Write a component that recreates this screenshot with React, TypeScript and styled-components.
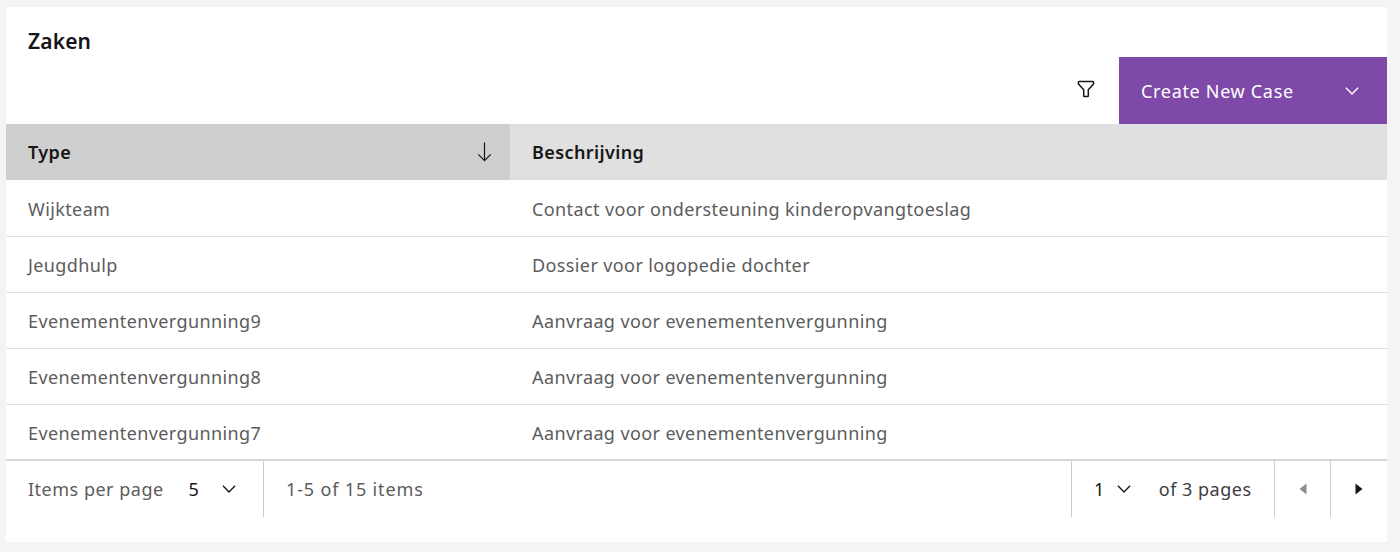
import React from 'react'
import styled, { createGlobalStyle } from 'styled-components'

const Global = createGlobalStyle`
  html, body {
    margin: 0;
    background: #f4f4f4;
    font-family: "Noto Sans", "Open Sans", sans-serif;
    color: #161616;
  }
`

const Card = styled.section`
  width: 1381px;
  height: 535px;
  margin: 7px 0 0 6px;
  background: #fff;
  display: flex;
  flex-direction: column;
`

const Title = styled.h4`
  height: 50px;
  margin: 0;
  padding: 20px 0 0 22px;
  box-sizing: border-box;
  font-size: 21px;
  line-height: 28px;
  letter-spacing: 0.15px;
  font-weight: 600;
  color: #161616;
`

const Toolbar = styled.div`
  height: 67px;
  display: flex;
  justify-content: flex-end;
  align-items: stretch;
`

const IconButton = styled.button`
  width: 67px;
  border: 0;
  padding: 0 0 3px 0;
  background: none;
  display: flex;
  align-items: center;
  justify-content: center;
  color: #161616;
`

const CreateButton = styled.button`
  width: 268px;
  border: 0;
  padding: 0 26px 0 22px;
  background: #7e49a8;
  color: #fff;
  font: inherit;
  font-size: 18px;
  letter-spacing: 0.68px;
  display: flex;
  align-items: center;
  justify-content: space-between;
`

const Table = styled.table`
  width: 100%;
  border-collapse: collapse;
  table-layout: fixed;
`

const HeadCell = styled.th<{ $sorted?: boolean }>`
  height: 56px;
  padding: 0 16px 0 22px;
  box-sizing: border-box;
  background: ${p => (p.$sorted ? '#cfcfcf' : '#e0e0e0')};
  width: ${p => (p.$sorted ? '504px' : 'auto')};
  font-size: 18px;
  font-weight: 600;
  letter-spacing: 0.4px;
  text-align: left;
  color: #161616;
`

const HeadInner = styled.div`
  display: flex;
  align-items: center;
  justify-content: space-between;
`

const Cell = styled.td`
  height: 56px;
  padding: 2px 16px 0 22px;
  box-sizing: border-box;
  border-bottom: 1px solid #e0e0e0;
  font-size: 18px;
  letter-spacing: 0.39px;
  color: #5c5c5c;
`

const Footer = styled.footer`
  height: 58px;
  margin-top: -2px;
  border-top: 2px solid #d6d6d6;
  box-sizing: border-box;
  display: flex;
  font-size: 18px;
  letter-spacing: 0.5px;
  color: #5c5c5c;
`

const FooterGroup = styled.div<{ $width?: number; $grow?: boolean; $center?: boolean }>`
  ${p => (p.$width ? `width: ${p.$width}px;` : '')}
  ${p => (p.$grow ? 'flex: 1;' : '')}
  box-sizing: border-box;
  display: flex;
  align-items: center;
  justify-content: ${p => (p.$center ? 'center' : 'flex-start')};
  padding-left: ${p => (p.$center ? 0 : 22)}px;
  border-left: 1px solid #cacaca;
  &:first-child {
    border-left: 0;
  }
`

const RangeLabel = styled.span`
  letter-spacing: 0.85px;
`

const Value = styled.span<{ $gap: number; $iconGap: number }>`
  display: flex;
  align-items: center;
  margin-left: ${p => p.$gap}px;
  color: #161616;
  gap: ${p => p.$iconGap}px;
`

const PagesLabel = styled.span`
  margin-left: 26px;
  color: #3d3d3d;
`

const Row = ({ type, desc }: { type: string; desc: string }) => (
  <tr>
    <Cell>{type}</Cell>
    <Cell>{desc}</Cell>
  </tr>
)

const Chevron = ({ size = 18 }: { size?: number }) => (
  <svg width={size} height={size} viewBox="0 0 16 16" fill="none" stroke="currentColor" strokeWidth="1.2">
    <path d="M2.6 5.2 8 10.6l5.4-5.4" />
  </svg>
)

const Funnel = () => (
  <svg width="22" height="22" viewBox="0 0 22 22" fill="none" stroke="currentColor" strokeWidth="1.5" strokeLinejoin="round">
    <path d="M3.4 4.2c0-.5.3-.8.8-.8h13.6c.5 0 .8.3.8.8v1.3c0 .3-.1.5-.3.7l-5 5.6v6.1c0 .4-.2.6-.6.6H9.3c-.4 0-.6-.2-.6-.6v-6.1l-5-5.6c-.2-.2-.3-.4-.3-.7z" />
  </svg>
)

const SortArrow = () => (
  <svg width="18" height="24" viewBox="0 0 18 24" fill="none" stroke="currentColor" strokeWidth="1.2">
    <path d="M8.5 2.5v18M2.3 14.4 8.5 20.6l6.2-6.2" />
  </svg>
)

const Caret = ({ left, muted }: { left?: boolean; muted?: boolean }) => (
  <svg width="12" height="14" viewBox="0 0 12 14" fill={muted ? '#8d8d8d' : '#161616'}>
    <path d={left ? 'M9.5 1.5v11L2.5 7z' : 'M2.5 1.5v11L9.5 7z'} />
  </svg>
)

export default function App() {
  return (
    <>
      <Global />
      <Card>
        <Title>Zaken</Title>
        <Toolbar>
          <IconButton aria-label="Filter">
            <Funnel />
          </IconButton>
          <CreateButton>
            Create New Case
            <Chevron />
          </CreateButton>
        </Toolbar>
        <Table>
          <thead>
            <tr>
              <HeadCell $sorted>
                <HeadInner>
                  Type
                  <SortArrow />
                </HeadInner>
              </HeadCell>
              <HeadCell>Beschrijving</HeadCell>
            </tr>
          </thead>
          <tbody>
            <Row type="Wijkteam" desc="Contact voor ondersteuning kinderopvangtoeslag" />
            <Row type="Jeugdhulp" desc="Dossier voor logopedie dochter" />
            <Row type="Evenementenvergunning9" desc="Aanvraag voor evenementenvergunning" />
            <Row type="Evenementenvergunning8" desc="Aanvraag voor evenementenvergunning" />
            <Row type="Evenementenvergunning7" desc="Aanvraag voor evenementenvergunning" />
          </tbody>
        </Table>
        <Footer>
          <FooterGroup $width={257}>
            Items per page
            <Value $gap={25} $iconGap={21}>
              5
              <Chevron />
            </Value>
          </FooterGroup>
          <FooterGroup $grow>
            <RangeLabel>1-5 of 15 items</RangeLabel>
          </FooterGroup>
          <FooterGroup $width={203}>
            <Value $gap={0} $iconGap={10}>
              1
              <Chevron />
            </Value>
            <PagesLabel>of 3 pages</PagesLabel>
          </FooterGroup>
          <FooterGroup $width={56} $center>
            <Caret left muted />
          </FooterGroup>
          <FooterGroup $width={57} $center>
            <Caret />
          </FooterGroup>
        </Footer>
      </Card>
    </>
  )
}
